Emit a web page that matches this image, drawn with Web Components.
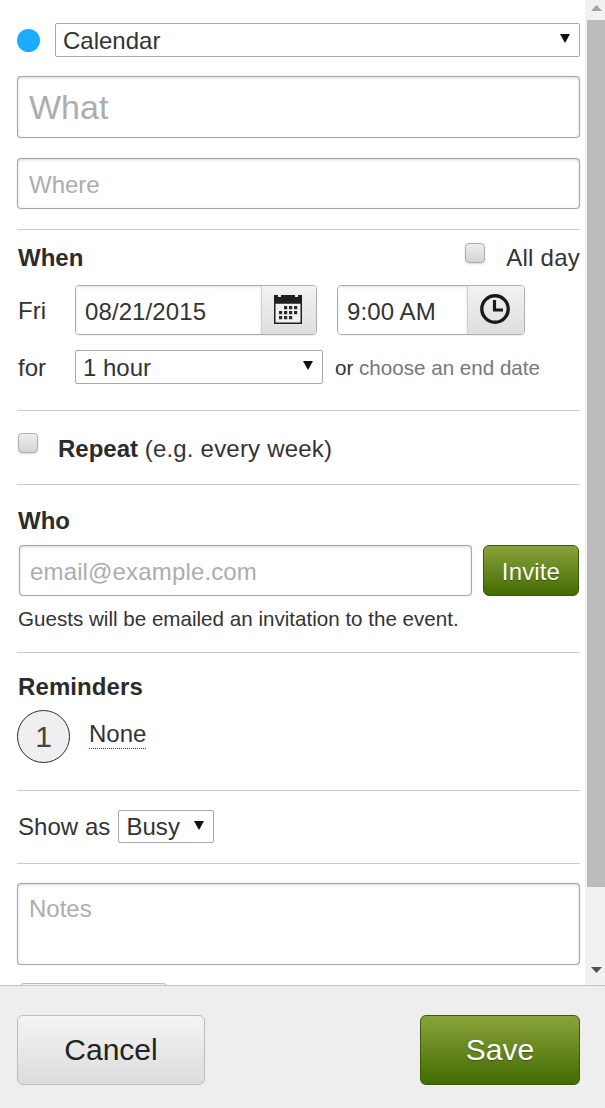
<!DOCTYPE html>
<html>
<head>
<meta charset="utf-8">
<title>New event</title>
<style>
  html, body { margin: 0; height: 100%; overflow: hidden; background: #fff; }
  body { font-family: "Liberation Sans", Arial, sans-serif; color: #333; }
</style>
</head>
<body>
<cal-app></cal-app>

<script>
// native-looking dropdown, the label comes in through the slot
class CalSelect extends HTMLElement {
  constructor() {
    super()
    this.attachShadow({ mode: 'open' }).innerHTML = `
      <style>
        :host {
          display: flex;
          align-items: center;
          justify-content: space-between;
          box-sizing: border-box;
          height: 34px;
          padding: 0 9px 0 7px;
          background: #fff;
          border: 1px solid #a9a9a9;
          border-radius: 2px;
          font-size: 24px;
          color: #333;
        }
        span { padding-top: var(--label-top, 2px); }
        svg { display: block; margin-top: -3px; }
      </style>
      <span><slot></slot></span>
      <svg width="10" height="9" viewBox="0 0 10 9"><path d="M0 0h10L5 9z" fill="#111"/></svg>
    `
  }
}
window.customElements.define('cal-select', CalSelect)

// text box, slot holds the placeholder or value
class CalField extends HTMLElement {
  constructor() {
    super()
    this.attachShadow({ mode: 'open' }).innerHTML = `
      <style>
        :host {
          display: flex;
          align-items: center;
          box-sizing: border-box;
          padding: 3px 10px 0 11px;
          background: #fff;
          border: 1px solid #a8a8a8;
          border-radius: 4px;
          box-shadow: 0 0 1px #b4b4b4, inset 0 1px 3px rgba(0, 0, 0, .16);
          font-size: 24px;
          color: #adadad;
        }
      </style>
      <slot></slot>
    `
  }
}
window.customElements.define('cal-field', CalField)

class CalCheck extends HTMLElement {
  constructor() {
    super()
    this.attachShadow({ mode: 'open' }).innerHTML = `
      <style>
        :host {
          display: block;
          box-sizing: border-box;
          width: 20px;
          height: 20px;
          border: 1px solid #aeaeae;
          border-radius: 4px;
          background: linear-gradient(#eeeeee, #d4d4d4);
          box-shadow: 0 1px 2px rgba(0, 0, 0, .16);
        }
      </style>
    `
  }
}
window.customElements.define('cal-check', CalCheck)

// date and time input: value on the left, icon button on the right
class CalPicker extends HTMLElement {
  constructor() {
    super()
    this.attachShadow({ mode: 'open' }).innerHTML = `
      <style>
        :host {
          display: flex;
          box-sizing: border-box;
          height: 50px;
          border: 1px solid #aeaeae;
          border-radius: 4px;
          overflow: hidden;
          font-size: 24px;
          letter-spacing: .1px;
          color: #333;
          box-shadow: 0 1px 1px rgba(0, 0, 0, .06);
        }
        .value {
          flex: 1;
          display: flex;
          align-items: center;
          padding: 4px 0 0 9px;
          background: #fff;
          box-shadow: inset 0 1px 3px rgba(0, 0, 0, .12);
        }
        .icon {
          box-sizing: border-box;
          width: var(--icon-width, 55px);
          display: flex;
          align-items: center;
          justify-content: center;
          border-left: 1px solid #d0d0d0;
          background: linear-gradient(#f2f2f2, #dedede);
        }
      </style>
      <div class="value"><slot></slot></div>
      <div class="icon"><slot name="icon"></slot></div>
    `
  }
}
window.customElements.define('cal-picker', CalPicker)

class CalButton extends HTMLElement {
  constructor() {
    super()
    this.attachShadow({ mode: 'open' }).innerHTML = `
      <style>
        :host {
          display: flex;
          align-items: center;
          justify-content: center;
          box-sizing: border-box;
          border: 1px solid #bdbdbd;
          border-radius: 6px;
          background: linear-gradient(#f4f4f4, #dcdcdc);
          color: #222;
          font-size: 30px;
        }
        :host([primary]) {
          border-color: #3c5a0a;
          background: linear-gradient(#8aa33a, #426c02);
          color: #fff;
          text-shadow: 0 1px 1px rgba(0, 0, 0, .35);
        }
      </style>
      <slot></slot>
    `
  }
}
window.customElements.define('cal-button', CalButton)

class CalScrollbar extends HTMLElement {
  constructor() {
    super()
    this.attachShadow({ mode: 'open' }).innerHTML = `
      <style>
        :host {
          display: flex;
          flex-direction: column;
          flex: none;
          box-sizing: border-box;
          width: 20px;
          padding-left: 2px;
          background: #f1f1f1;
        }
        .end { display: flex; justify-content: center; align-items: center; }
        .up { height: 16px; padding-bottom: 4px; }
        .thumb { height: 867px; background: #bcbcbc; }
        .rest { flex: 1; }
        .down { height: 30px; }
      </style>
      <div class="end up"><svg width="11" height="6" viewBox="0 0 11 6"><path d="M5.5 0L11 6H0z" fill="#a3a3a3"/></svg></div>
      <div class="thumb"></div>
      <div class="rest"></div>
      <div class="end down"><svg width="11" height="6" viewBox="0 0 11 6"><path d="M0 0h11L5.5 6z" fill="#505050"/></svg></div>
    `
  }
}
window.customElements.define('cal-scrollbar', CalScrollbar)

class CalReminder extends HTMLElement {
  constructor() {
    super()
    this.attachShadow({ mode: 'open' }).innerHTML = `
      <style>
        :host { display: flex; align-items: flex-start; gap: 19px; font-size: 24px; color: #333; }
        .num {
          box-sizing: border-box;
          width: 53px;
          height: 53px;
          display: flex;
          align-items: center;
          justify-content: center;
          border: 1.5px solid #2b2b2b;
          border-radius: 50%;
          background: #efefef;
          font-size: 30px;
          color: #444;
        }
        .label {
          margin-top: 10px;
          line-height: 27px;
          padding-bottom: 1px;
          border-bottom: 1px dotted #333;
        }
      </style>
      <div class="num"><slot name="number"></slot></div>
      <div class="label"><slot></slot></div>
    `
  }
}
window.customElements.define('cal-reminder', CalReminder)

class CalApp extends HTMLElement {
  constructor() {
    super()
    this.attachShadow({ mode: 'open' }).innerHTML = `
      <style>
        :host {
          display: flex;
          flex-direction: column;
          height: 1108px;
          font-size: 24px;
          color: #333;
        }
        .pane { display: flex; height: 985px; flex: none; overflow: hidden; background: #fff; }
        .form { flex: 1; min-width: 0; padding: 23px 5px 0 17px; }
        .row { display: flex; align-items: center; }
        .sec { border-top: 1px solid #ccc; }
        h3 { margin: 0; font-size: 24px; line-height: 30px; font-weight: bold; color: #2b2b2b; }
        .lab { width: 58px; flex: none; padding: 1px 0 0 1px; box-sizing: border-box; }
        .dot { width: 23px; height: 23px; border-radius: 50%; background: #1aadff; margin-right: 15px; flex: none; }
        .cal { flex: 1; }
        .what { height: 62px; margin-top: 19px; font-size: 34px; padding-top: 0; }
        .where { height: 51px; margin: 20px 0; }
        .when { padding: 13px 0 26px; }
        .when .head { justify-content: space-between; height: 30px; align-items: flex-start; margin-bottom: 12px; }
        .when h3 { padding-left: 1px; }
        .allday { display: flex; gap: 21px; align-items: flex-start; line-height: 30px; letter-spacing: .25px; }
        .date { width: 242px; --icon-width: 55px; }
        .time { width: 188px; margin-left: 20px; --icon-width: 57px; }
        .time svg { margin: -2px 3px 0 0; }
        .date svg { margin: -2px 2px 0 0; }
        .for { margin-top: 15px; }
        .for cal-select { width: 248px; }
        .end { font-size: 20.6px; margin-left: 12px; color: #333; padding-top: 1px; }
        .end span { color: #777; }
        .repeat { padding: 22px 0 19px 1px; height: 32px; align-items: flex-start; }
        .repeat div { margin-left: 20px; line-height: 32px; }
        .repeat b { color: #2b2b2b; }
        .repeat i { font-style: normal; letter-spacing: .2px; }
        .who { padding: 21px 0 18px 1px; }
        .invite-row { margin-top: 9px; padding-left: 1px; }
        .email { flex: 1; height: 51px; margin-right: 11px; letter-spacing: .15px; padding-left: 10px; }
        .invite { width: 96px; height: 51px; font-size: 24px; margin-right: 1px; padding-top: 3px; letter-spacing: .15px; }
        .note { font-size: 20.6px; line-height: 30px; margin-top: 8px; }
        .reminders { padding: 19px 0 27px; }
        .reminders h3 { padding-left: 1px; margin-bottom: 8px; letter-spacing: .1px; }
        .show { padding: 19px 0 20px 1px; letter-spacing: .05px; }
        .show cal-select { width: 96px; height: 33px; margin-left: 8px; --label-top: 0; }
        .notes { padding-top: 19px; }
        .notes cal-field { height: 82px; align-items: flex-start; padding-top: 11px; }
        .peek { width: 151px; height: 40px; margin: 18px 0 0 1px; font-size: 24px; }
        .foot {
          flex: 1;
          display: flex;
          justify-content: space-between;
          align-items: flex-start;
          padding: 29px 25px 0 17px;
          border-top: 1px solid #c4c4c4;
          background: #eee;
        }
        .cancel { width: 188px; height: 70px; }
        .save { width: 160px; height: 70px; }
      </style>
      <div class="pane">
        <div class="form">
          <div class="row">
            <div class="dot"></div>
            <cal-select class="cal">Calendar</cal-select>
          </div>
          <cal-field class="what">What</cal-field>
          <cal-field class="where">Where</cal-field>

          <div class="sec when">
            <div class="row head">
              <h3>When</h3>
              <div class="allday"><cal-check></cal-check><span>All day</span></div>
            </div>
            <div class="row">
              <span class="lab">Fri</span>
              <cal-picker class="date">08/21/2015
                <svg slot="icon" width="28" height="30" viewBox="0 0 28 30">
                  <path d="M0 1h4v2h3V1h14v2h3V1h4v9H0z" fill="#1f1f1f"/>
                  <path d="M.75 9h26.5v20.25H.75z" fill="#f2f2f2" stroke="#1f1f1f" stroke-width="1.5"/>
                  <path d="M10 12h3.2v3.2H10zM15 12h3.2v3.2H15zM20 12h3.2v3.2H20zM5 17h3.2v3.2H5zM10 17h3.2v3.2H10zM15 17h3.2v3.2H15zM20 17h3.2v3.2H20zM5 22h3.2v3.2H5zM10 22h3.2v3.2H10zM15 22h3.2v3.2H15z" fill="#2a2a2a"/>
                </svg>
              </cal-picker>
              <cal-picker class="time">9:00 AM
                <svg slot="icon" width="30" height="30" viewBox="0 0 30 30">
                  <circle cx="15" cy="15" r="13.2" fill="none" stroke="#1a1a1a" stroke-width="3.4"/>
                  <path d="M14.5 6v10h8.5" fill="none" stroke="#1a1a1a" stroke-width="3.2"/>
                </svg>
              </cal-picker>
            </div>
            <div class="row for">
              <span class="lab">for</span>
              <cal-select>1 hour</cal-select>
              <div class="end">or <span>choose an end date</span></div>
            </div>
          </div>

          <div class="sec">
            <div class="row repeat">
              <cal-check></cal-check>
              <div><b>Repeat</b> <i>(e.g. every week)</i></div>
            </div>
          </div>

          <div class="sec who">
            <h3>Who</h3>
            <div class="row invite-row">
              <cal-field class="email">email@example.com</cal-field>
              <cal-button class="invite" primary>Invite</cal-button>
            </div>
            <div class="note">Guests will be emailed an invitation to the event.</div>
          </div>

          <div class="sec reminders">
            <h3>Reminders</h3>
            <cal-reminder><span slot="number">1</span>None</cal-reminder>
          </div>

          <div class="sec show">
            <div class="row">Show as<cal-select>Busy</cal-select></div>
          </div>

          <div class="sec notes">
            <cal-field>Notes</cal-field>
            <cal-button class="peek"></cal-button>
          </div>
        </div>
        <cal-scrollbar></cal-scrollbar>
      </div>
      <div class="foot">
        <cal-button class="cancel">Cancel</cal-button>
        <cal-button class="save" primary>Save</cal-button>
      </div>
    `
  }
}
window.customElements.define('cal-app', CalApp)
</script>
</body>
</html>
